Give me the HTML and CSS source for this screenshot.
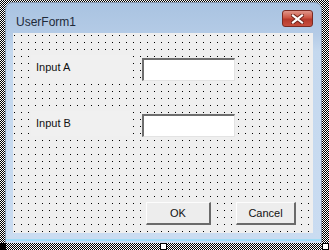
FILE: index.html
```html
<!DOCTYPE html>
<html lang="en">
<head>
    <meta charset="UTF-8">
    <title>UserForm1</title>
    <link rel="stylesheet" href="styles.css">
</head>
<body>
    <!-- Het formulier in ontwerpmodus -->
    <div class="venster">
        <div class="titelbalk">
            <span class="titel">UserForm1</span>
            <button class="sluiten" type="button">
                <svg width="13" height="10" viewBox="0 0 13 10">
                    <path d="M2 1.5 L11 8.5 M11 1.5 L2 8.5" stroke="#6b2118" stroke-width="4" stroke-linecap="square"/>
                    <path d="M2 1.5 L11 8.5 M11 1.5 L2 8.5" stroke="#fff" stroke-width="2.2" stroke-linecap="square"/>
                </svg>
            </button>
        </div>
        <div class="client">
            <div class="rij">
                <div class="label">Input A</div>
                <div class="tekstvak"></div>
            </div>
            <div class="rij tweede">
                <div class="label">Input B</div>
                <div class="tekstvak"></div>
            </div>
            <div class="knoppen">
                <div class="knop ok">OK</div>
                <div class="knop annuleer">Cancel</div>
            </div>
        </div>
    </div>

    <!-- Selectie-grepen -->
    <span class="greep zwart links-onder"></span>
    <span class="greep midden-onder"></span>
    <span class="greep rechts-onder"></span>
</body>
</html>
```

FILE: styles.css
```css
/* Basis stijlen */
body {
    margin: 0;
    width: 329px;
    height: 250px;
    position: relative;
    overflow: hidden;
    background: repeating-conic-gradient(#000 0 25%, #fff 0 50%) 0 0 / 2px 2px;
    font-family: "Liberation Sans", Arial, sans-serif;
}

.venster {
    position: absolute;
    left: 5px;
    top: 2px;
    width: 317px;
    height: 241px;
    box-sizing: border-box;
    padding: 0 8px 10px 7px;
    border-radius: 7px 7px 0 0;
    border: 1px solid #8497ae;
    border-bottom: none;
    background:
        linear-gradient(#9fdcf5, #9fdcf5) 0 calc(100% - 2px) / 100% 2px no-repeat,
        linear-gradient(#a9c3e1, #b4cbe6 13%, #c4d8ee 20%, #cadcf1);
    display: flex;
    flex-direction: column;
}

.titelbalk {
    height: 30px;
    display: flex;
    align-items: center;
    justify-content: space-between;
}

.titel {
    font-size: 12px;
    color: #1e2a3a;
    padding-left: 3px;
    margin-top: 8px;
}

.sluiten {
    width: 31px;
    height: 17px;
    margin-top: 1px;
    margin-right: 0;
    padding: 0;
    border: 1px solid #7a2a22;
    border-radius: 3px;
    background: linear-gradient(#e0968a, #cc5543 45%, #b5382a 55%, #c8503f);
    display: flex;
    align-items: center;
    justify-content: center;
}

.client {
    flex: 1;
    display: flex;
    flex-direction: column;
    padding: 22px 0 8px 18px;
    background:
        conic-gradient(at 1px 1px, transparent 75%, #000 0) 1px 2px / 7px 7px,
        #efefef;
}

.rij {
    display: flex;
    align-items: flex-start;
}

.tweede {
    margin-top: 30px;
}

.label {
    width: 95px;
    height: 25px;
    padding-left: 5px;
    line-height: 25px;
    font-size: 11px;
    color: #111;
    background: #f0f0f0;
}

.tekstvak {
    width: 93px;
    height: 23px;
    margin: 3px 0 0 11px;
    box-sizing: border-box;
    background: #fff;
    border-top: 2px solid #6e6e6e;
    border-left: 2px solid #6e6e6e;
    border-right: 1px solid #e3e3e3;
    border-bottom: 1px solid #e3e3e3;
}

.knoppen {
    margin-top: auto;
    display: flex;
    justify-content: flex-end;
    gap: 25px;
    padding-right: 17px;
}

.knop {
    height: 23px;
    box-sizing: border-box;
    display: flex;
    align-items: center;
    justify-content: center;
    font-size: 11px;
    color: #111;
    background: #ededed;
    border-top: 1px solid #fcfcfc;
    border-left: 1px solid #fcfcfc;
    border-right: 2px solid #6a6a6a;
    border-bottom: 2px solid #6a6a6a;
}

.ok {
    width: 65px;
}

.annuleer {
    width: 60px;
}

.greep {
    position: absolute;
    width: 5px;
    height: 5px;
    background: #fff;
    border: 1px solid #000;
}

.zwart {
    background: #000;
}

.links-onder {
    left: -1px;
    top: 243px;
}

.midden-onder {
    left: 160px;
    top: 243px;
}

.rechts-onder {
    left: 322px;
    top: 243px;
}
```
